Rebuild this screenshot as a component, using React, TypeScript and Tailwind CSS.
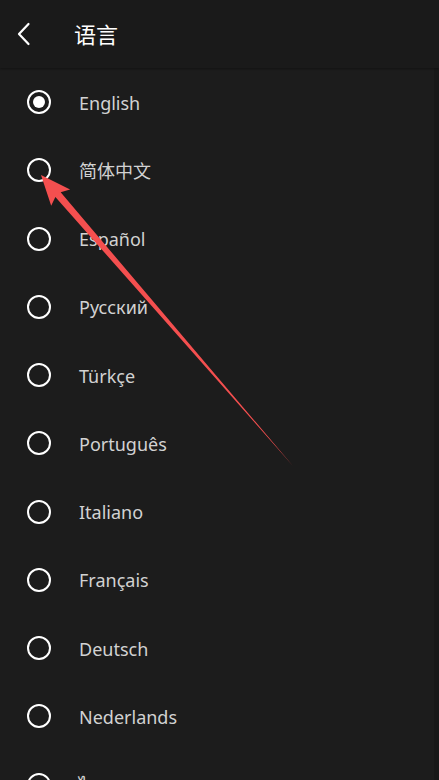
import React from "react";

const langs = [
  "English",
  "简体中文",
  "Español",
  "Русский",
  "Türkçe",
  "Português",
  "Italiano",
  "Français",
  "Deutsch",
  "Nederlands",
  "ไทย",
];

function Radio({ checked }: { checked: boolean }) {
  return (
    <div className="w-[24px] h-[24px] rounded-full border-[2.5px] border-white flex items-center justify-center shrink-0">
      {checked && <div className="w-[12px] h-[12px] rounded-full bg-white" />}
    </div>
  );
}

export default function App() {
  const T = [41, 175];
  const tail = [293, 466];
  const dx = tail[0] - T[0];
  const dy = tail[1] - T[1];
  const len = Math.hypot(dx, dy);
  const u = [dx / len, dy / len];
  const n = [-u[1], u[0]];
  const p = (d: number, w: number) =>
    `${T[0] + u[0] * d + n[0] * w},${T[1] + u[1] * d + n[1] * w}`;
  const pts = [
    `${T[0]},${T[1]}`,
    p(30, 12.5),
    p(26, 3.5),
    `${tail[0]},${tail[1]}`,
    p(26, -3.5),
    p(30, -12.5),
  ].join(" ");

  return (
    <div
      className="relative w-[439px] h-[780px] overflow-hidden bg-[#1c1c1c] flex flex-col"
      style={{ fontFamily: '"Noto Sans", "Noto Sans CJK SC", sans-serif' }}
    >
      <div className="h-[68px] shrink-0 bg-[#1a1a1a] flex items-center shadow-[0_1px_2px_rgba(0,0,0,0.35)] z-10">
        <div className="w-[74px] flex items-center pl-[17px]">
          <svg width="14" height="24" viewBox="0 0 14 24" fill="none">
            <path d="M11.5 2 L2 12 L11.5 22" stroke="white" strokeWidth="2.2" strokeLinecap="round" strokeLinejoin="round" />
          </svg>
        </div>
        <div className="text-white text-[22px] leading-none pb-[1px]">语言</div>
      </div>
      <div className="flex flex-1 min-h-0">
        <div className="flex-1 flex flex-col">
          {langs.map((l, i) => (
            <div key={l} className="h-[68.25px] shrink-0 flex items-center">
              <div className="w-[79px] pl-[27px] flex items-center">
                <Radio checked={i === 0} />
              </div>
              <div className="text-[#d2d2d2] text-[18px] leading-none pt-[1px]">{l}</div>
            </div>
          ))}
        </div>
        <div className="w-[5px] bg-[#181818]" />
      </div>
      <svg className="absolute inset-0 pointer-events-none" width="439" height="780">
        <polygon points={pts} fill="#f44f4f" />
      </svg>
    </div>
  );
}
